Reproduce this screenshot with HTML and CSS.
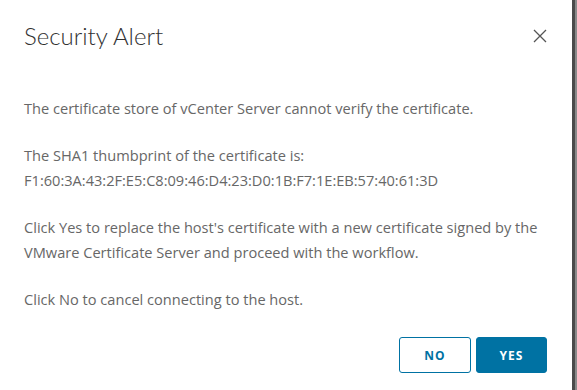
FILE: index.html
```html
<!DOCTYPE html>
<html lang="en">
<head>
  <meta charset="UTF-8">
  <title>Security Alert</title>
  <link rel="stylesheet" href="styles.css">
</head>
<body>
  <!-- Modal dialog -->
  <div class="modal">
    <div class="modal-header">
      <h3 class="modal-title">Security Alert</h3>
      <button class="close" aria-label="Close">
        <svg width="16" height="16" viewBox="0 0 16 16">
          <path d="M2 2 L14 14 M14 2 L2 14" stroke="#555" stroke-width="1.3" fill="none"/>
        </svg>
      </button>
    </div>

    <div class="modal-body">
      <p>The certificate store of vCenter Server cannot verify the certificate.</p>
      <p>The SHA1 thumbprint of the certificate is:<br>F1:60:3A:43:2F:E5:C8:09:46:D4:23:D0:1B:F7:1E:EB:57:40:61:3D</p>
      <p>Click Yes to replace the host's certificate with a new certificate signed by the VMware Certificate Server and proceed with the workflow.</p>
      <p>Click No to cancel connecting to the host.</p>
    </div>

    <div class="modal-footer">
      <button class="btn btn-outline">NO</button>
      <button class="btn btn-primary">YES</button>
    </div>
  </div>
</body>
</html>
```

FILE: styles.css
```css
/* Reset */
* {
  margin: 0;
  padding: 0;
  box-sizing: border-box;
}

body {
  font-family: 'Open Sans', sans-serif;
  background: #8a8a8a;
  height: 390px;
  overflow: hidden;
}

/* Dialog */
.modal {
  width: 575px;
  height: 390px;
  background: #fff;
  border-right: 3px solid #4b4b4b;
  display: flex;
  flex-direction: column;
}

.modal-header {
  display: flex;
  justify-content: space-between;
  align-items: center;
  padding: 19px 24px 0 24px;
}

.modal-title {
  font-family: 'Lato', sans-serif;
  font-weight: 300;
  font-size: 24px;
  line-height: 34px;
  color: #313131;
}

.close {
  background: none;
  border: none;
  width: 16px;
  height: 16px;
  cursor: pointer;
}

.modal-body {
  padding: 43px 24px 0 24px;
  font-size: 14.6px;
  line-height: 25px;
  color: #676767;
}

.modal-body p {
  margin-bottom: 22px;
}

/* Buttons */
.modal-footer {
  display: flex;
  justify-content: flex-end;
  gap: 5px;
  padding: 0 25px 0 24px;
  margin-top: auto;
  margin-bottom: 17px;
}

.btn {
  width: 72px;
  height: 36px;
  border-radius: 3px;
  font-family: 'Open Sans', sans-serif;
  font-size: 12px;
  font-weight: 700;
  letter-spacing: 1px;
  cursor: pointer;
}

.btn-outline {
  background: #fff;
  color: #0072a3;
  border: 1px solid #0072a3;
}

.btn-primary {
  width: 71px;
  background: #0072a3;
  color: #fff;
  border: 1px solid #0072a3;
}
```
